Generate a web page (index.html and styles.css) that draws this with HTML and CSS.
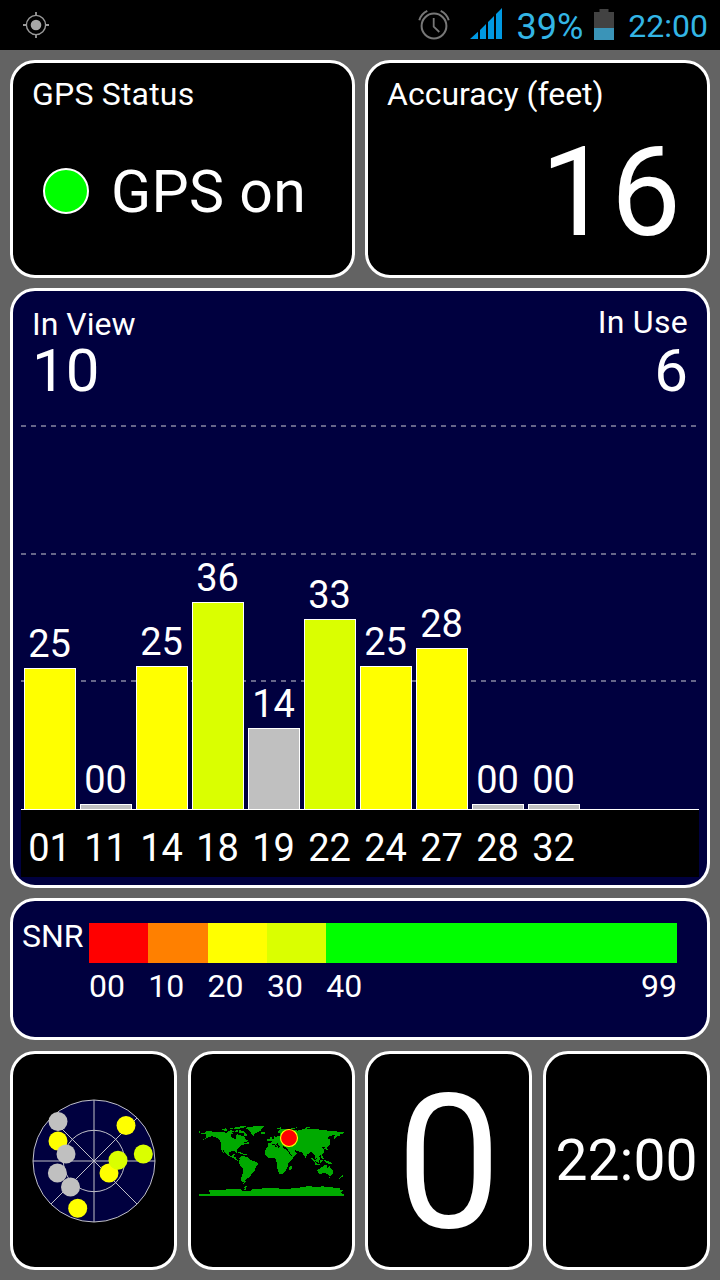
FILE: index.html
```html
<!DOCTYPE html>
<html lang="en">
<head>
  <meta charset="UTF-8">
  <meta name="viewport" content="width=device-width, initial-scale=1">
  <title>GPS Status</title>
  <link rel="stylesheet" href="styles.css">
</head>
<body>

  <header class="status-bar">
    <svg class="icon-gps" viewBox="0 0 28 28">
      <circle cx="14" cy="14" r="9.6" fill="none" stroke="#999" stroke-width="1.4"/>
      <circle cx="14" cy="14" r="5.3" fill="#a8a8a8"/>
      <path d="M14 1v3.5M14 23.5V27M1 14h3.5M23.5 14H27" stroke="#999" stroke-width="1.8"/>
    </svg>
    <div class="status-right">
      <svg class="icon-alarm" viewBox="0 0 32 32" fill="none" stroke="#777">
        <circle cx="16" cy="17" r="12.4" stroke-width="2"/>
        <path d="M15.7 9v8.6l5.6 5.4" stroke-width="1.8"/>
        <path d="M1.3 11.2C2.6 7 5.3 3.8 9.3 1.9M30.7 11.2C29.4 7 26.7 3.8 22.7 1.9" stroke-width="2"/>
      </svg>
      <svg class="icon-signal" viewBox="0 0 32 32" fill="#0099e2">
        <path d="M0 31L8 23.8V31zM10 31V22L16 16V31zM18 31V14L24 8V31zM26 31V6L32 0V31z"/>
      </svg>
      <span class="battery-text">39%</span>
      <svg class="icon-battery" viewBox="0 0 20 31">
        <path d="M0 3h5.5V0h9v3H20v16H0z" fill="#424242"/>
        <path d="M0 19h20v12H0z" fill="#3a94b8"/>
      </svg>
      <span class="clock">22:00</span>
    </div>
  </header>

  <main class="screen">
    <div class="row row-top">
      <section class="card">
        <div class="label status-label">GPS Status</div>
        <div class="gps-state">
          <span class="dot"></span>
          <span class="gps-text">GPS on</span>
        </div>
      </section>
      <section class="card">
        <div class="label">Accuracy (feet)</div>
        <div class="accuracy">16</div>
      </section>
    </div>

    <section class="card blue signal">
      <div class="counts">
        <div class="count">
          <div class="label">In View</div>
          <div class="count-value">10</div>
        </div>
        <div class="count in-use">
          <div class="label">In Use</div>
          <div class="count-value">6</div>
        </div>
      </div>
      <div class="plot">
        <div class="sat"><span>25</span><div class="bar yellow" style="height:141px"></div></div>
        <div class="sat"><span>00</span><div class="bar grey" style="height:5px"></div></div>
        <div class="sat"><span>25</span><div class="bar yellow" style="height:143px"></div></div>
        <div class="sat"><span>36</span><div class="bar lime" style="height:207px"></div></div>
        <div class="sat"><span>14</span><div class="bar grey" style="height:81px"></div></div>
        <div class="sat"><span>33</span><div class="bar lime" style="height:190px"></div></div>
        <div class="sat"><span>25</span><div class="bar yellow" style="height:143px"></div></div>
        <div class="sat"><span>28</span><div class="bar yellow" style="height:161px"></div></div>
        <div class="sat"><span>00</span><div class="bar grey" style="height:5px"></div></div>
        <div class="sat"><span>00</span><div class="bar grey" style="height:5px"></div></div>
      </div>
      <div class="sat-ids">
        <span>01</span><span>11</span><span>14</span><span>18</span><span>19</span>
        <span>22</span><span>24</span><span>27</span><span>28</span><span>32</span>
      </div>
    </section>

    <section class="card blue snr">
      <div class="snr-title">SNR</div>
      <div class="snr-scale">
        <div class="scale-item"><div class="swatch red"></div>00</div>
        <div class="scale-item"><div class="swatch orange"></div>10</div>
        <div class="scale-item"><div class="swatch yellow"></div>20</div>
        <div class="scale-item"><div class="swatch lime"></div>30</div>
        <div class="scale-item wide"><div class="swatch green"></div><div class="ends"><span>40</span><span>99</span></div></div>
      </div>
    </section>

    <div class="row row-bottom">
      <section class="card tile">
        <!-- sky view -->
        <svg class="radar" viewBox="-62 -62 124 124">
          <circle r="61" fill="#00003f"/>
          <g fill="none" stroke="#c0c0c8" stroke-width="1">
            <circle r="61"/>
            <circle r="30.7"/>
            <path d="M-61 0H61M0-61V61M-43-43L43 43M43-43L-43 43"/>
          </g>
          <g fill="#ff0">
            <circle cx="32" cy="-35.5" r="9.5"/>
            <circle cx="-36" cy="-20" r="9.5"/>
            <circle cx="15" cy="12" r="9.5"/>
            <circle cx="-16.3" cy="47.3" r="9.5"/>
          </g>
          <g fill="#daff00">
            <circle cx="24" cy="-.7" r="9.5"/>
            <circle cx="49.3" cy="-7" r="9.5"/>
          </g>
          <g fill="#c0c0c0">
            <circle cx="-36" cy="-39.5" r="9.5"/>
            <circle cx="-28" cy="-7" r="9.5"/>
            <circle cx="-36.6" cy="12" r="9.5"/>
            <circle cx="-23.5" cy="26" r="9.5"/>
          </g>
        </svg>
      </section>
      <section class="card tile">
        <svg class="map" viewBox="18 15 435 213">
          <g fill="#00aa00" shape-rendering="crispEdges">
            <!-- north america -->
            <path d="M18 33H22V38H36V35L52 33L60 36H84L98 38L112 36V33H116V38L122 40L114 44L112 49L120 54L127 58L129 52L131 43L140 44L146 49L150 47L155 53L160 59L166 62L160 66L150 68L159 71L152 74L144 76L141 81L134 87L131 92V99L126 94L117 93L110 96L108 101L110 108L116 108L119 103H125L122 110L129 112L131 119L137 121L135 123L128 120L121 114L112 111L104 106L98 99L91 90L89 92L95 100L92 101L86 90L83 82V68L80 62L75 56L68 51L58 49L48 51L36 57L27 61L42 51L38 48L42 45L37 42L18 40Z"/>
            <path d="M87 29L98 25L104 29L98 34ZM102 34L116 30L124 35L114 38ZM112 25H120V28H112ZM123 23L136 20L164 17L150 24L134 27L123 26ZM126 32L134 30V37H126ZM138 31L150 32L157 38L165 45L159 50L152 47L153 40L138 38ZM136 48L142 47L144 51H137ZM162 66L168 68V72L160 71Z"/>
            <path d="M160 23L176 20L196 18H212V21L206 25L204 31L197 36L187 39L181 48L176 44L172 36L167 29L158 26ZM204 37L213 36L218 39L211 43L205 41Z"/>
            <path d="M133 97L143 96L150 101L142 101ZM151 103H161V106H151Z"/>
            <!-- south america -->
            <path d="M139 113L145 108L155 109L165 113L170 119L178 122L188 125L195 130L193 136L188 141L187 151L182 157L176 160L173 167L167 173L162 174L159 179L155 180V185L151 188V193L158 187V183H155L157 187L149 186L145 181V173L148 165L150 153V144L142 137L137 128V122L140 118Z"/>
            <path d="M154 202L161 197H164L159 203L160 211H150L156 207Z"/>
            <!-- europe and asia -->
            <path d="M226 77V69H235L236 64L231 61L239 58L244 54L243 49L249 50L262 48V40H253L255 33L265 27L278 26L291 31L300 33L307 29L313 33L315 30L325 29L339 25L355 28H374L390 31L408 32L425 34L453 36V40L440 42L442 47L434 48L428 55L424 58L423 50L428 44L416 47L408 49L404 55L412 60L411 67L406 75L400 78V82L404 89L399 91L395 82L388 80L389 85L395 93L391 101L383 105L378 108L382 115L379 121L374 117L370 113L371 119L377 128L372 124L367 116L365 107L359 99L354 96L346 101L341 106L337 114L333 106L327 97L318 95L307 91L305 95L309 98H315L304 108L296 114L291 110L285 99L279 88V82L270 79L264 82L258 78L254 70L249 73L256 79L253 81L245 73L239 71L235 78L229 80Z"/>
            <path d="M229 59L233 50L236 51V56L241 60L240 64H230ZM223 58H227V63H223ZM250 24L263 22L266 25L254 28ZM291 27L298 24L312 22L302 27ZM340 21H352V24H340ZM388 30H402V33H388Z"/>
            <path d="M403 76L406 71L408 63L411 71L408 78L401 85L394 87L395 82ZM382 92H385V98H382ZM383 102L388 104L389 110L394 116L388 117L384 110Z"/>
            <path d="M352 111L358 114L365 121L368 128L364 127L357 119ZM368 119L376 112L380 115L377 125L371 127L367 123ZM365 129L382 132V135H366ZM382 119H390L386 126L382 128ZM392 120L401 122L411 125L417 132L410 131L402 130Z"/>
            <!-- africa -->
            <path d="M225 78L233 76L246 75V80L256 83L261 80L277 83L282 93L288 103L292 108L303 107L300 114L293 122L286 130V139L281 144L280 150L274 158L269 162L261 163L257 157L254 148L251 137L253 130L249 124L248 116L244 114L232 115L222 111L216 103V93L219 86Z"/>
            <path d="M294 136L297 139L295 149L290 151L288 146L290 140Z"/>
            <!-- oceania -->
            <path d="M373 149L379 146L384 142L390 139L395 135L401 136L402 142L406 144L408 134L412 143L418 150L421 157L419 163L413 168L407 167L402 162L397 158L390 160L381 162L375 160ZM409 171H413L411 175H408ZM447 165L451 168L446 172L439 177L437 175L443 170Z"/>
            <!-- antarctica -->
            <path d="M18 222H49L53 218L49 215V211L64 209L90 210L110 207H142L147 212L170 214L178 208L200 207L216 204L240 203L262 206L284 207L302 204L318 203L334 201L346 198L370 201L390 199L412 202L440 204V209L451 211L447 215L442 219L453 222V228H18Z"/>
          </g>
          <path d="M270 82L278 82L286 89L281 91ZM282 90L286 91L297 108L294 108Z" fill="#000" shape-rendering="crispEdges"/>
          <circle cx="288" cy="54" r="25.5" fill="#f00" stroke="#ff0" stroke-width="3.5"/>
        </svg>
      </section>
      <section class="card tile"><span class="speed">0</span></section>
      <section class="card tile"><span class="time">22:00</span></section>
    </div>
  </main>

</body>
</html>
```
FILE: styles.css
```css
* {
  margin: 0;
  padding: 0;
  box-sizing: border-box;
}
body {
  width: 720px;
  height: 1280px;
  overflow: hidden;
  background: #636363;
  color: #fff;
  font-family: Roboto, "Liberation Sans", sans-serif;
}
svg {
  display: block;
  flex: none;
}

/* status bar */
.status-bar {
  height: 50px;
  background: #000;
  display: flex;
  justify-content: space-between;
  padding: 0 12px 0 22px;
  color: #33b5e5;
}
.icon-gps {
  width: 28px;
  height: 28px;
  margin-top: 11px;
}
.status-right {
  display: flex;
}
.icon-alarm {
  width: 32px;
  height: 32px;
  margin: 9px 20px 0 0;
}
.icon-signal {
  width: 32px;
  height: 32px;
  margin: 8px 14px 0 0;
}
.battery-text {
  font-size: 36px;
  line-height: 42px;
  margin-top: 6px;
}
.icon-battery {
  width: 20px;
  height: 31px;
  margin: 9px 14px 0 11px;
}
.clock {
  font-size: 32px;
  line-height: 38px;
  margin-top: 7px;
}

/* cards */
.screen {
  padding: 10px;
}
.row {
  display: flex;
  gap: 10px;
}
.card {
  flex: 1;
  border: 3px solid #fff;
  border-radius: 25px;
  background: #000;
}
.blue {
  background: #00003f;
}
.label {
  font-size: 32px;
  line-height: 38px;
}
.status-label {
  letter-spacing: 0.2px;
}
.row-top {
  height: 218px;
  margin-bottom: 10px;
}
.row-top .card {
  padding: 12px 26px 0 19px;
}
.gps-state {
  display: flex;
  align-items: center;
  height: 68px;
  margin-top: 44px;
  padding-left: 11px;
}
.dot {
  width: 46px;
  height: 46px;
  border: 2px solid #fff;
  border-radius: 50%;
  background: #0f0;
}
.gps-text {
  margin: 2px 0 0 22px;
  font-size: 59px;
  line-height: 68px;
  letter-spacing: 0.3px;
}
.accuracy {
  font-size: 125px;
  line-height: 148px;
  margin-top: 6px;
  text-align: right;
}

/* satellite signal chart */
.signal {
  height: 600px;
  padding: 17px 8px 8px;
  margin-bottom: 10px;
}
.counts {
  display: flex;
  justify-content: space-between;
  height: 117px;
  padding: 0 11px;
}
.counts .label {
  line-height: 32px;
}
.count-value {
  font-size: 60px;
  line-height: 60px;
  margin-top: 1px;
}
.in-use {
  text-align: right;
}
.in-use .label {
  margin-top: -2px;
  letter-spacing: 0.3px;
}
.in-use .count-value {
  margin-top: 3px;
}
.plot {
  --dash: repeating-linear-gradient(90deg, #666689 0 5px, transparent 5px 10px);
  height: 385px;
  padding-left: 3px;
  display: flex;
  align-items: flex-end;
  gap: 4px;
  border-bottom: 1px solid #fff;
  background: var(--dash) 0 0 / 678px 2px no-repeat,
              var(--dash) 0 128px / 678px 2px no-repeat,
              var(--dash) 0 255px / 678px 2px no-repeat;
}
.sat {
  width: 52px;
  text-align: center;
  font-size: 38px;
  line-height: 44px;
}
.sat span {
  display: block;
  margin: 0 1px 2px 0;
}
.bar {
  border: 1px solid #fff;
  border-bottom: 0;
}
.sat-ids {
  height: 67px;
  padding: 16px 0 0 3px;
  background: #000;
  display: flex;
  gap: 4px;
  font-size: 38px;
  line-height: 44px;
}
.sat-ids span {
  width: 52px;
  padding-right: 1px;
  text-align: center;
}

.red { background: #f00; }
.orange { background: #ff8000; }
.yellow { background: #ff0; }
.lime { background: #daff00; }
.green { background: #0f0; }
.grey { background: #c0c0c0; }

/* snr legend */
.snr {
  height: 142px;
  display: flex;
  margin-bottom: 11px;
  padding: 16px 30px 0 9px;
  font-size: 32px;
  line-height: 38px;
}
.snr-title {
  width: 67px;
}
.snr-scale {
  flex: 1;
  display: flex;
  padding-top: 6px;
}
.scale-item {
  width: 59.3px;
}
.wide {
  flex: 1;
}
.swatch {
  height: 40px;
  margin-bottom: 4px;
}
.ends {
  display: flex;
  justify-content: space-between;
}

/* bottom tiles */
.row-bottom {
  height: 219px;
  gap: 10.6px;
}
.tile {
  display: flex;
  align-items: center;
  justify-content: center;
}
.radar {
  width: 124px;
  height: 124px;
}
.map {
  width: 145px;
  height: 71px;
}
.speed {
  font-size: 187px;
  line-height: 213px;
  padding-top: 5px;
}
.time {
  font-size: 57px;
  line-height: 68px;
  padding-top: 1px;
}
```
